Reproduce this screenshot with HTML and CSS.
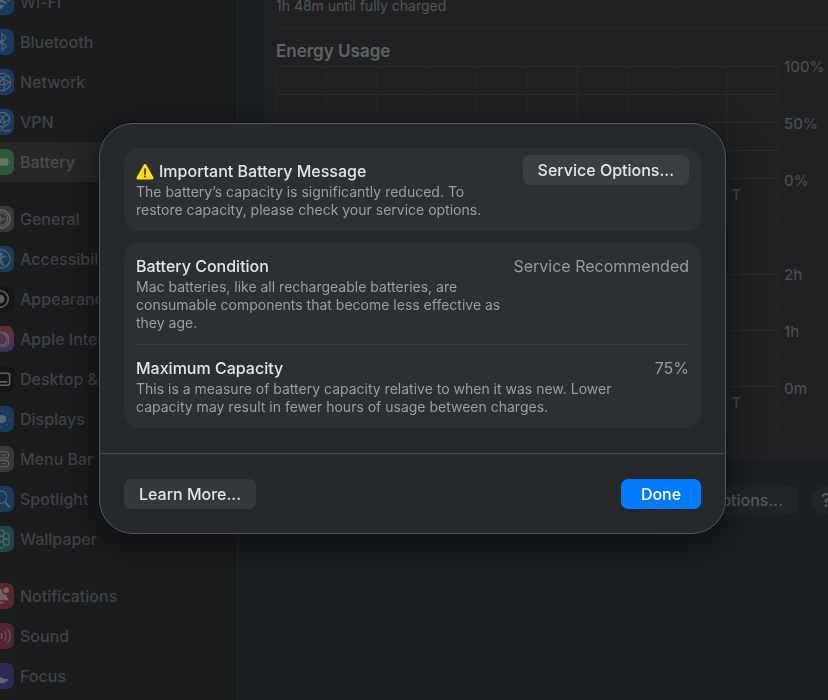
FILE: index.html
```html
<!DOCTYPE html>
<html lang="en">
<head>
<meta charset="utf-8">
<title>Battery</title>
<link rel="stylesheet" href="styles.css">
</head>
<body>
<div class="window">
  <nav class="sidebar" aria-label="Settings">
    <ul class="group">
      <li><a class="item" href="#"><svg class="icon blue" viewBox="0 0 27 27"><g class="line"><path d="M5 12q8.500-8 17 0M8 15q5.500-5 11 0" stroke-width="2.400"/></g><path class="fill" d="M13.500 21l-3-3.500q3-2.500 6 0z"/></svg>Wi-Fi</a></li>
      <li><a class="item" href="#"><svg class="icon blue" viewBox="0 0 27 27"><path class="line" d="M9 8.500l10 9.500-4.500 4.500v-18L19 9 9 18.500"/></svg>Bluetooth</a></li>
      <li><a class="item" href="#"><svg class="icon blue" viewBox="0 0 27 27"><g class="line"><circle cx="14.500" cy="13.500" r="9"/><path d="M8 7.500l7 1.500 6-2M15 9l-3.500 7 6 .5 5.500-3.500M15 9l2.500 7.500-1.500 6M11.500 16l-3 4.500M11.500 16l-6-3M15 9l7 5"/></g></svg>Network</a></li>
      <li><a class="item" href="#"><svg class="icon blue" viewBox="0 0 27 27"><g class="line"><circle cx="15" cy="11" r="7.500"/><path d="M9.500 6.500l6 1.500 4.500-2M15.500 8l-3 5.500 5 .5 4.500-3M15.500 8l2 6-1.500 4M12.500 13.500l-2.500 3M15 18.500v4M6 22.500h8M16 22.500h7"/></g></svg>VPN</a></li>
      <li><a class="item selected" href="#" aria-current="page"><svg class="icon green" viewBox="0 0 27 27"><rect class="fill" x="3.500" y="9.500" width="17.500" height="8" rx="2"/><path class="fill" d="M22 11.500q2.500 2 0 4z"/></svg>Battery</a></li>
    </ul>
    <ul class="group">
      <li><a class="item" href="#"><svg class="icon gray" viewBox="0 0 27 27"><g class="line"><circle cx="14" cy="13.500" r="9" stroke-width="2"/><circle cx="14" cy="13.500" r="6.500"/><path d="M14 13.500h6.500M14 13.500l-3-5.500M14 13.500l-3 5.500"/></g></svg>General</a></li>
      <li><a class="item" href="#"><svg class="icon azure" viewBox="0 0 27 27"><g class="line"><circle cx="13.500" cy="13.500" r="9.500"/><path stroke-width="1.800" d="M8.500 10.500l5 1.500 5-1.500M13.500 12v3.500l-2.500 5M13.500 15.500l2.500 5"/></g><circle class="fill" cx="13.500" cy="8.500" r="1.700"/></svg>Accessibility</a></li>
      <li><a class="item" href="#"><svg class="icon black" viewBox="0 0 27 27"><circle class="line bright" cx="12.500" cy="13.500" r="8.500"/><path class="fill bright" d="M12.500 9a4.500 4.500 0 0 1 0 9z"/></svg>Appearance</a></li>
      <li><a class="item" href="#"><svg class="icon" viewBox="0 0 27 27"><defs><linearGradient id="intel" x1="0" y1="1" x2="0" y2="0"><stop offset="0" stop-color="#33335a"/><stop offset=".5" stop-color="#5a2f4c"/><stop offset="1" stop-color="#6b2a33"/></linearGradient></defs><rect width="27" height="27" rx="7" fill="url(#intel)"/><g class="line"><circle cx="12.500" cy="14" r="7"/><circle cx="15" cy="13" r="6.500"/><path d="M8 7q10-3 13 6t-7 8"/></g></svg>Apple Intelligence &amp; Siri</a></li>
      <li><a class="item" href="#"><svg class="icon black" viewBox="0 0 27 27"><rect class="line bright" x="4.500" y="7.500" width="18" height="12.500" rx="2.500"/><path class="fill bright" d="M7 15.500h13v2H7z"/></svg>Desktop &amp; Dock</a></li>
      <li><a class="item" href="#"><svg class="icon blue" viewBox="0 0 27 27"><circle class="fill" cx="14.500" cy="13.500" r="4.200"/><path class="line" stroke-dasharray="1 5.440" d="M14.500 5.300a8.200 8.200 0 1 1 0 16.400 8.200 8.200 0 1 1 0-16.400"/></svg>Displays</a></li>
      <li><a class="item" href="#"><svg class="icon gray" viewBox="0 0 27 27"><g class="line"><rect x="6" y="6" width="15.500" height="6.500" rx="3.200"/><rect x="6" y="15" width="15.500" height="6.500" rx="3.200"/><path d="M15 9.200h3M15 18.200h3"/></g></svg>Menu Bar</a></li>
      <li><a class="item" href="#"><svg class="icon azure" viewBox="0 0 27 27"><g class="line"><circle cx="13" cy="11.500" r="6.500"/><path stroke-width="2" d="M17.500 16.500l5 5.500"/></g></svg>Spotlight</a></li>
      <li><a class="item" href="#"><svg class="icon teal" viewBox="0 0 27 27"><g class="line"><circle cx="13.500" cy="13.500" r="3"/><circle cx="13.500" cy="7.500" r="3.200"/><circle cx="19" cy="10.500" r="3.200"/><circle cx="19" cy="16.500" r="3.200"/><circle cx="13.500" cy="19.500" r="3.200"/><circle cx="8" cy="10.500" r="3.200"/><circle cx="8" cy="16.500" r="3.200"/></g></svg>Wallpaper</a></li>
    </ul>
    <ul class="group">
      <li><a class="item" href="#"><svg class="icon red" viewBox="0 0 27 27"><path class="fill" d="M6 18q3-3 3-7 .5-5 6-5a4 4 0 0 0 4 6q0 3 3 6zM11 19.500h6q-3 4-6 0z"/><circle class="fill" cx="18.800" cy="7.600" r="3"/></svg>Notifications</a></li>
      <li><a class="item" href="#"><svg class="icon pink" viewBox="0 0 27 27"><path class="fill" d="M3 11h3l5-4v13l-5-4H3z"/><path class="line" d="M13.500 10.500q2 3 0 6M17 8.500q3.500 5 0 10M20.500 6.500q5 7 0 14"/></svg>Sound</a></li>
      <li><a class="item" href="#"><svg class="icon indigo" viewBox="0 0 27 27"><path class="fill" d="M11 6q-1 12 10.500 10.500Q18 22 12 21 5 19 6 12q1-4 5-6z"/></svg>Focus</a></li>
    </ul>
  </nav>
  <main class="content">
    <section class="panel">
      <p class="status">1h 48m until fully charged</p>
      <h2 class="heading">Energy Usage</h2>
      <div class="chart level">
        <svg class="plot" viewBox="0 0 502 162" preserveAspectRatio="none" aria-hidden="true">
          <path class="rule" d="M0 .5h502M0 28.500h502M0 56.500h502M0 84.500h502M0 112.500h502M301.500 0v112"/>
          <path class="tick" d="M.5 0v162M50.500 0v162M100.500 0v162M150.500 0v162M200.500 0v162M251.500 0v162M351.500 0v162M401.500 0v162M451.500 0v162M501.500 0v162"/>
        </svg>
        <div class="days"><span>T</span></div>
        <div class="scale"><span>100%</span><span>50%</span><span>0%</span></div>
      </div>
      <div class="chart usage">
        <svg class="plot" viewBox="0 0 502 162" preserveAspectRatio="none" aria-hidden="true">
          <path class="rule" d="M0 .5h502M0 56.500h502M0 112.500h502M301.500 0v112"/>
          <path class="tick" d="M.5 0v162M50.500 0v162M100.500 0v162M150.500 0v162M200.500 0v162M251.500 0v162M351.500 0v162M401.500 0v162M451.500 0v162M501.500 0v162"/>
        </svg>
        <div class="days"><span>T</span></div>
        <div class="scale"><span>2h</span><span>1h</span><span>0m</span></div>
      </div>
    </section>
    <div class="actions">
      <button class="dim-button" type="button">Options...</button>
      <button class="dim-button help" type="button" aria-label="Help">?</button>
    </div>
  </main>
</div>

<div class="overlay">
  <section class="sheet" role="dialog" aria-modal="true" aria-labelledby="message">
    <div class="cards">
      <div class="card">
        <div class="row">
          <div class="info">
            <h1 class="title" id="message"><svg class="warning" viewBox="0 0 18 18" aria-hidden="true"><path d="M9 2.500L16 15H2z" fill="#ffdc0a" stroke="#ffdc0a" stroke-width="3" stroke-linejoin="round"/><path d="M9 6v5" stroke="#3b3508" stroke-width="1.700" stroke-linecap="round"/><circle cx="9" cy="13.600" r="1" fill="#3b3508"/></svg>Important Battery Message</h1>
            <p class="note">The battery’s capacity is significantly reduced. To restore capacity, please check your service options.</p>
          </div>
          <button class="button raised" type="button">Service Options...</button>
        </div>
      </div>
      <div class="card">
        <div class="row">
          <div class="info">
            <h2 class="title">Battery Condition</h2>
            <p class="note">Mac batteries, like all rechargeable batteries, are consumable components that become less effective as they age.</p>
          </div>
          <span class="value">Service Recommended</span>
        </div>
        <div class="row">
          <div class="info">
            <h2 class="title">Maximum Capacity</h2>
            <p class="note">This is a measure of battery capacity relative to when it was new. Lower capacity may result in fewer hours of usage between charges.</p>
          </div>
          <span class="value">75%</span>
        </div>
      </div>
    </div>
    <footer class="footer">
      <button class="button" type="button">Learn More...</button>
      <button class="button primary" type="button">Done</button>
    </footer>
  </section>
</div>
</body>
</html>
```
FILE: styles.css
```css
* { box-sizing: border-box; margin: 0; padding: 0; }

body {
  height: 100vh;
  overflow: hidden;
  background: #1a1f21;
  color: #e4e6e6;
  font: 16px/23px Inter, "Liberation Sans", sans-serif;
}

button { border: 0; font: inherit; color: inherit; }

.window { display: flex; height: 100vh; overflow: hidden; }

/* Sidebar, scrolled part of the way down */
.sidebar {
  flex: 0 0 238px;
  height: 100%;
  overflow: hidden;
  border-right: 1px solid #232728;
  background: #1a1c1e;
}

.group { list-style: none; margin-bottom: 17px; }
.group:first-child { margin-top: -18px; }

.item {
  display: flex;
  align-items: center;
  gap: 6px;
  height: 40px;
  margin-left: -12px;
  white-space: nowrap;
  color: #404345;
  font-size: 16px;
  font-weight: 500;
  text-decoration: none;
}

.selected { background: #252827; color: #494d4c; }

.icon { flex: none; width: 26px; height: 26px; border-radius: 7px; }
.blue { background: #1a3a60; }
.azure { background: #1a3b59; }
.green { background: #2b5a34; }
.gray { background: #37393b; }
.black { background: #141617; }
.teal { background: #1b4746; }
.red { background: #5a2629; }
.pink { background: #552432; }
.indigo { background: #2c2a56; }
.line { fill: none; stroke: #56636e; stroke-width: 1.2px; }
.fill { fill: #5d676f; }
.gray .line, .red .line, .pink .line { stroke: #606163; }
.red .fill, .pink .fill { fill: #6f6264; }
.green .fill { fill: #637567; }
.line.bright { stroke: #5f6162; stroke-width: 1.6px; }
.fill.bright { fill: #5f6162; }

/* Battery pane behind the sheet */
.content { flex: 1; min-width: 0; }

.panel {
  height: 460px;
  margin-left: 26px;
  padding-left: 12px;
  background: #1f2123;
}

.status {
  height: 28px;
  border-bottom: 1px solid #272a2b;
  color: #525556;
  font-size: 14px;
  line-height: 12px;
}

.heading {
  height: 38px;
  color: #606364;
  font-size: 17px;
  font-weight: 600;
  line-height: 47px;
}

.chart {
  display: grid;
  grid-template-columns: 1fr 50px;
  height: 162px;
  margin-bottom: 46px;
}

.plot { grid-area: 1 / 1; width: 100%; height: 100%; }
.rule { fill: none; stroke: #2a2c2e; }
.tick { fill: none; stroke: #292b2d; stroke-dasharray: 3 3; }

.days {
  grid-area: 1 / 1;
  align-self: end;
  display: grid;
  grid-template-columns: repeat(10, 1fr);
  height: 45px;
  color: #434547;
  font-size: 14px;
  font-weight: 600;
}
.days span { grid-column: 10; padding-left: 4px; }

.scale {
  display: flex;
  flex-direction: column;
  gap: 34px;
  margin-top: -11px;
  padding-left: 6px;
  color: #494c4e;
  font-size: 15px;
  font-weight: 500;
}

.actions {
  display: flex;
  justify-content: flex-end;
  gap: 13px;
  margin: 25px -13px 0 0;
}

.dim-button {
  height: 30px;
  padding: 0 15px;
  border-radius: 8px;
  background: #212527;
  color: #585b5c;
  font-size: 16px;
  font-weight: 500;
}
.help { width: 30px; padding: 0; border-radius: 50%; font-size: 18px; }

/* Sheet */
.overlay { position: fixed; inset: 0; padding: 123px 102px 0 99px; }

.sheet {
  border: 1px solid #54595b;
  border-radius: 34px;
  background: #24292c;
  box-shadow: 0 8px 36px 4px rgba(0, 0, 0, .45), 0 0 2px #0a0c0d;
}

.cards { display: grid; gap: 12px; padding: 24px 24px 25px; }
.card { padding: 0 12px; border-radius: 14px; background: #2b3033; }

.row {
  display: flex;
  align-items: flex-start;
  justify-content: space-between;
  gap: 12px;
  padding: 12px 0;
}
.row + .row { border-top: 1px solid #393e41; }
.info { flex: 1; min-width: 0; }

.title {
  display: flex;
  align-items: center;
  gap: 5px;
  font-size: 16px;
  font-weight: 500;
  line-height: 23px;
}
.warning { width: 18px; height: 18px; }

.note { color: #9b9fa1; font-size: 14px; line-height: 18px; }
.value { color: #989c9e; }

.button {
  height: 30px;
  padding: 0 15px;
  border-radius: 7px;
  background: #33383b;
  font-size: 16px;
  font-weight: 500;
}
.raised { margin: -5px 0; background: #393e41; }
.primary { min-width: 80px; background: #007aff; color: #fff; }

.footer {
  display: flex;
  justify-content: space-between;
  padding: 25px 24px 24px;
  border-top: 1px solid #45494c;
}
```
